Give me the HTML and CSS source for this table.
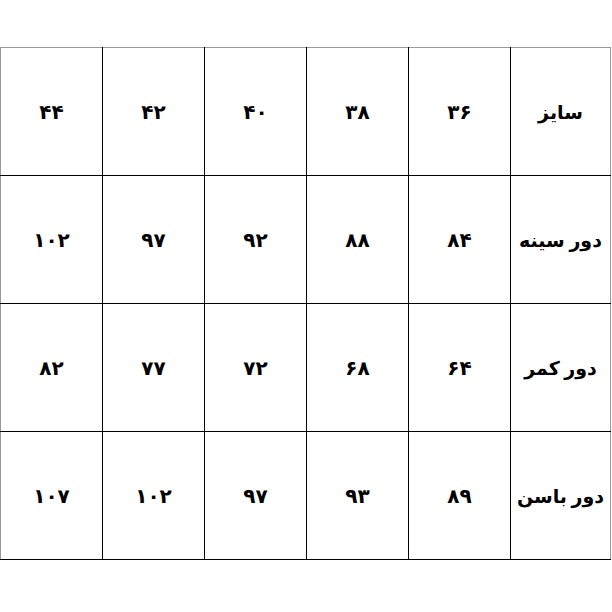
FILE: index.html
```html
<!DOCTYPE html>
<html lang="fa">
<head>
<meta charset="utf-8">
<link rel="stylesheet" href="styles.css">
</head>
<body>
<table class="sizes" dir="rtl">
  <tr><td class="label">سایز</td><td>۳۶</td><td>۳۸</td><td>۴۰</td><td>۴۲</td><td>۴۴</td></tr>
  <tr><td class="label">دور سینه</td><td>۸۴</td><td>۸۸</td><td>۹۲</td><td>۹۷</td><td>۱۰۲</td></tr>
  <tr><td class="label">دور کمر</td><td>۶۴</td><td>۶۸</td><td>۷۲</td><td>۷۷</td><td>۸۲</td></tr>
  <tr><td class="label">دور باسن</td><td>۸۹</td><td>۹۳</td><td>۹۷</td><td>۱۰۲</td><td>۱۰۷</td></tr>
</table>
</body>
</html>
```
FILE: styles.css
```css
html, body {
  margin: 0;
  padding: 0;
  background: #fff;
}
body {
  padding: 47px 0 0 0;
  font-family: "DejaVu Sans", sans-serif;
}
.sizes {
  border-collapse: collapse;
  table-layout: fixed;
  width: 611px;
  border-top: 1px solid #9a9a9a;
  border-left: 1px solid #9a9a9a;
  border-right: 1px solid #9a9a9a;
  border-bottom: 1px solid #000;
}
.sizes td {
  width: 101px;
  height: 127px;
  padding: 0;
  border: 1px solid #000;
  text-align: center;
  vertical-align: middle;
  font-weight: bold;
  font-size: 20px;
  color: #000;
  white-space: nowrap;
}
.sizes tr:first-child td { border-top-color: #9a9a9a; }
.sizes td.label {
  width: 99px;
  font-size: 19px;
  word-spacing: -2px;
  border-right-color: #9a9a9a;
}
.sizes td:last-child { border-left-color: #9a9a9a; }
```
